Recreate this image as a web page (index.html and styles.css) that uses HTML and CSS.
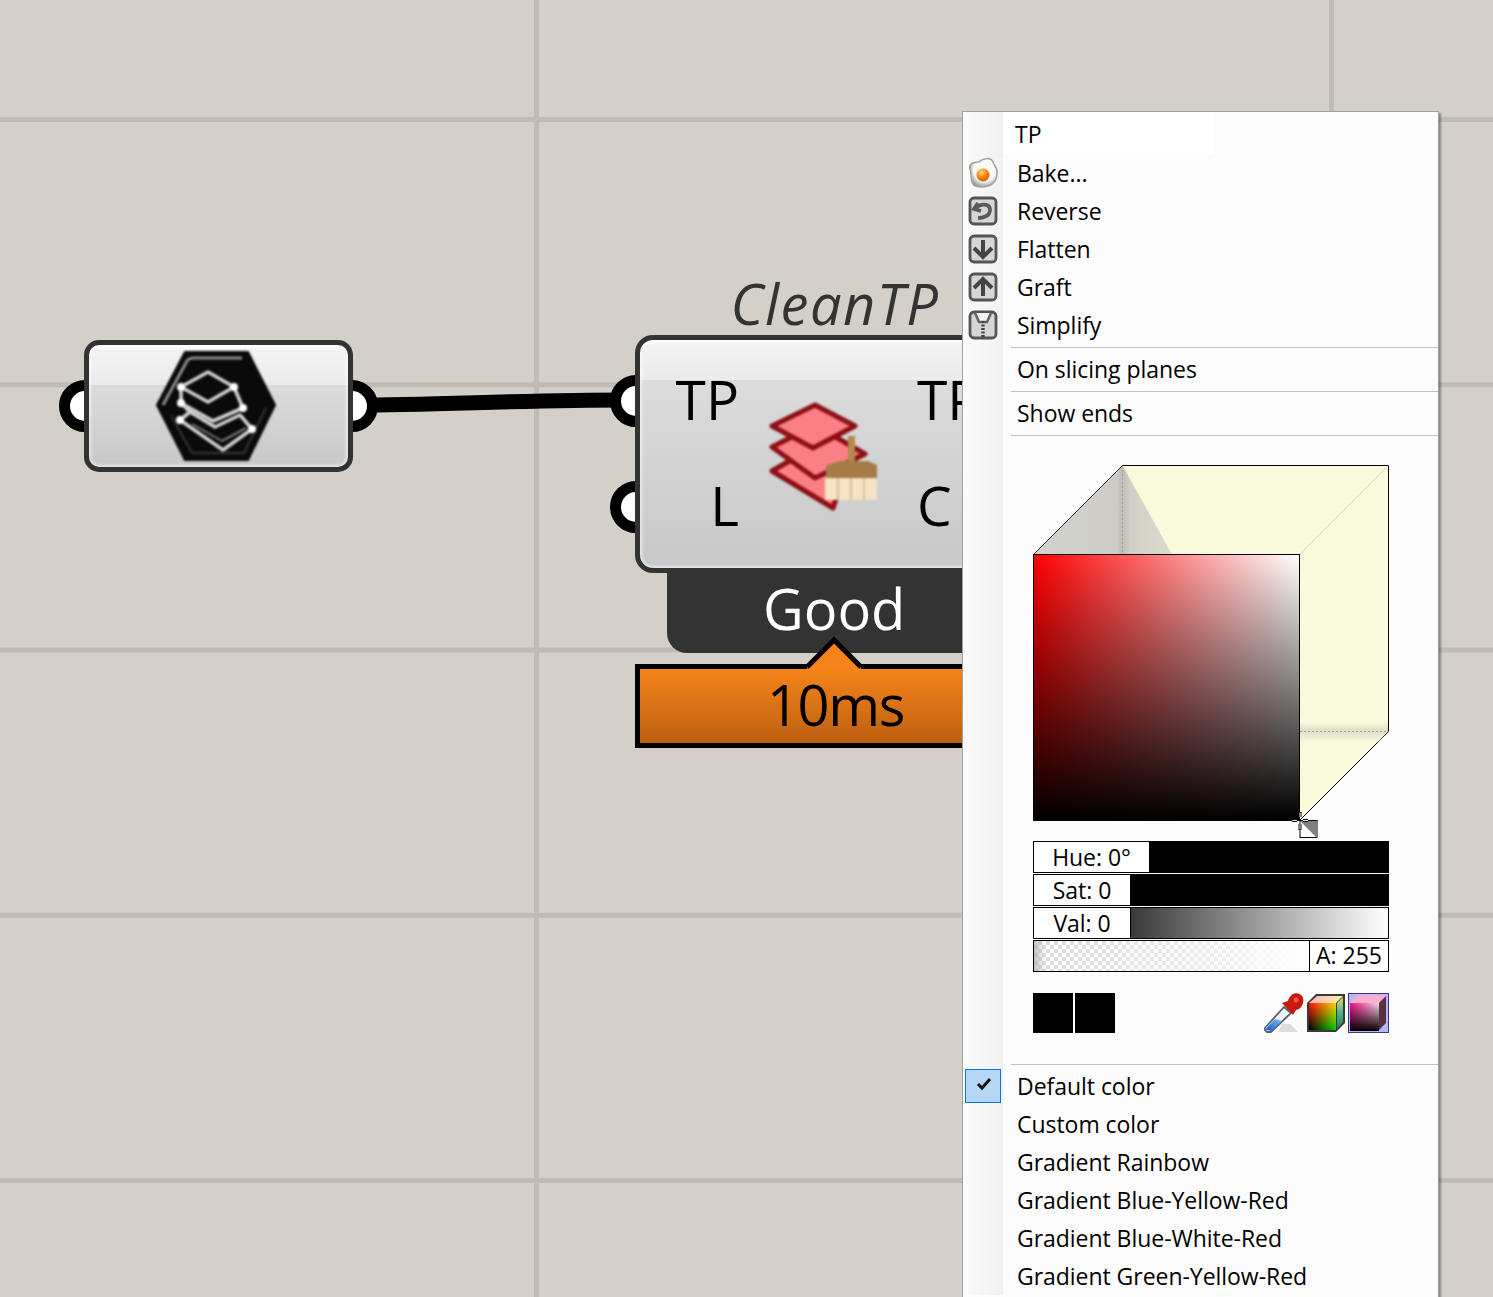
FILE: index.html
```html
<!DOCTYPE html>
<html lang="en">
<head>
<meta charset="utf-8">
<title>CleanTP</title>
<link rel="stylesheet" href="styles.css">
</head>
<body>
<main class="canvas">
  <svg class="wire" width="300" height="30" viewBox="0 0 300 30"><path d="M0 17 C80 17 170 12 270 12" fill="none" stroke="#000" stroke-width="15"/></svg>

  <section class="node source">
    <i class="port port-out"></i><i class="port port-in"></i>
    <div class="node-body source-body">
      <svg class="hex" width="130" height="120" viewBox="150 346 130 120">
        <polygon points="185,352 248,352 275,405 248,460 185,460 157,405" fill="#0a0a0a" stroke="#0a0a0a" stroke-width="2" stroke-linejoin="round"/>
        <path d="M163 405 L187 361 Q189 358 194 358 H242" fill="none" stroke="#8a8a8a" stroke-width="3"/>
        <path d="M171 415 L192 453 H244 L266 408" fill="none" stroke="#2e2e2e" stroke-width="2.500"/>
        <g fill="none" stroke="#d0d0d0" stroke-width="3.600" stroke-linejoin="round">
          <path d="M181 387 L208 372 L234 387 L208 402 Z"/>
          <path d="M181 387 V403 L213 421 L243 408 L234 387"/>
          <path d="M181 403 L190 412 L215 427 L240 415 L252 429 L223 450 L180 420 L190 412"/>
          <path d="M192 424 L222 441 L246 428" stroke-width="2" stroke="#777"/>
        </g>
        <g fill="#fff"><circle cx="181" cy="387" r="4"/><circle cx="234" cy="387" r="4"/><circle cx="181" cy="403" r="4"/><circle cx="243" cy="408" r="4"/><circle cx="180" cy="420" r="4"/><circle cx="252" cy="429" r="4"/></g>
      </svg>
    </div>
  </section>

  <section class="node clean">
    <h2 class="nick">CleanTP</h2>
    <i class="port port-in port-a"></i><i class="port port-in port-b"></i>
    <div class="node-body clean-body">
      <div class="params params-in"><span>TP</span><span>L</span></div>
      <svg class="broom" width="124" height="120" viewBox="760 396 124 120">
        <g stroke="#8c0f14" stroke-width="5" stroke-linejoin="round" fill="#fb8085">
          <polygon points="772,470 812,447 845,470 833,507"/>
          <polygon points="772,446 815,424 865,453 815,477"/>
          <polygon points="772,425 815,404 855,425 813,447"/>
        </g>
        <rect x="848" y="435" width="7" height="28" fill="#b08a4e"/>
        <path d="M826 464 L840 460 H868 L877 464 V477 H826 Z" fill="#a57c48"/>
        <rect x="825" y="477" width="52" height="22" fill="#f6e2c4"/>
        <path d="M838 477 V499 M851 477 V499 M864 477 V499" stroke="#dcc09a" stroke-width="2"/>
      </svg>
      <div class="params params-out"><span>TP</span><span>C</span></div>
    </div>
    <div class="message">Good</div>
    <div class="profiler">10ms</div>
    <svg class="pointer" width="60" height="34" viewBox="0 0 60 34"><path d="M3 32 L30 5 L57 32 V34 H3Z" fill="#f5841a"/><path d="M3 32 L30 5 L57 32" fill="none" stroke="#000" stroke-width="5"/></svg>
  </section>
</main>

<nav class="menu">
  <div class="menu-row name-row"><span class="gutter"></span><span class="name-box">TP</span></div>
  <div class="menu-row"><span class="gutter"><svg class="icon soft" width="32" height="32" viewBox="0 0 32 32"><defs><radialGradient id="egg" cx=".55" cy=".4" r=".65"><stop offset=".6" stop-color="#fbfbf8"/><stop offset="1" stop-color="#8a8a85"/></radialGradient><radialGradient id="yolk" cx=".4" cy=".3" r=".8"><stop offset="0" stop-color="#ffd98a"/><stop offset=".45" stop-color="#f78a10"/><stop offset="1" stop-color="#d84a08"/></radialGradient></defs><path d="M3 12 C1 6 8 5 12 5 C16 1 24 0 26 5 C27 9 31 11 30 16 C30 22 27 27 21 29 C15 31 8 30 6 27 C3 23 5 17 3 12Z" fill="url(#egg)" stroke="#a3a39e" stroke-width="1.500"/><circle cx="16" cy="18" r="6.500" fill="url(#yolk)"/></svg></span><span>Bake...</span></div>
  <div class="menu-row"><span class="gutter"><svg class="icon soft-btn" width="32" height="32" viewBox="0 0 32 32"><rect x="3" y="3" width="26" height="26" rx="4" class="btn-face"/><path d="M11 8 L7 14 L14 16 M8 14 C13 8 23 8 23 15 C23 21 16 23 11 23" fill="none" stroke="#5a5a5a" stroke-width="3.800"/></svg></span><span>Reverse</span></div>
  <div class="menu-row"><span class="gutter"><svg class="icon soft-btn" width="32" height="32" viewBox="0 0 32 32"><rect x="3" y="3" width="26" height="26" rx="4" class="btn-face"/><path d="M16 7 V24 M7 15 L16 24 L25 15" fill="none" stroke="#444" stroke-width="4"/></svg></span><span>Flatten</span></div>
  <div class="menu-row"><span class="gutter"><svg class="icon soft-btn" width="32" height="32" viewBox="0 0 32 32"><rect x="3" y="3" width="26" height="26" rx="4" class="btn-face"/><path d="M16 25 V8 M7 17 L16 8 L25 17" fill="none" stroke="#444" stroke-width="4"/></svg></span><span>Graft</span></div>
  <div class="menu-row"><span class="gutter"><svg class="icon soft-btn" width="32" height="32" viewBox="0 0 32 32"><rect x="3" y="3" width="26" height="26" rx="4" class="btn-face"/><path d="M8 4 L12 13 H20 L24 4" fill="#f4f4f4" stroke="#666" stroke-width="2.600"/><path d="M16 12 V28" stroke="#444" stroke-width="3.400" stroke-dasharray="2 1.500"/></svg></span><span>Simplify</span></div>
  <div class="menu-sep"><span class="gutter"></span><hr></div>
  <div class="menu-row"><span class="gutter"></span><span>On slicing planes</span></div>
  <div class="menu-sep"><span class="gutter"></span><hr></div>
  <div class="menu-row"><span class="gutter"></span><span>Show ends</span></div>
  <div class="menu-sep"><span class="gutter"></span><hr></div>

  <div class="picker-wrap">
    <span class="gutter"></span>
    <div class="picker">
      <svg class="cube" width="357" height="376" viewBox="0 0 357 376">
        <defs>
          <linearGradient id="sv-x"><stop offset="0" stop-color="#f00"/><stop offset="1" stop-color="#fff"/></linearGradient>
          <linearGradient id="sv-y" x2="0" y2="1"><stop offset="0" stop-color="#000" stop-opacity="0"/><stop offset="1" stop-color="#000"/></linearGradient>
          <linearGradient id="floor" x2="0" y2="1"><stop offset="0" stop-color="#f9f9dc"/><stop offset=".45" stop-color="#dcdcc6"/><stop offset="1" stop-color="#f9f9dc"/></linearGradient>
          <linearGradient id="wall"><stop offset="0" stop-color="#d2d2cc"/><stop offset=".6" stop-color="#cdcdc6"/><stop offset=".64" stop-color="#bdbdb6"/><stop offset=".7" stop-color="#d0d0c8"/><stop offset="1" stop-color="#dcdccc"/></linearGradient>
        </defs>
        <polygon points="89.500,.5 355.500,.5 355.500,266.500 267,355 0.500,89.500" fill="#f9f9dc" stroke="#000"/>
        <polygon points="89.500,.5 .5,89.500 139,89.500" fill="url(#wall)"/>
        <path d="M.5 89.500 L89.500 .5" stroke="#333" fill="none"/>
        <polygon points="267,257 355,257 355,266.500 345,277 267,277" fill="url(#floor)"/>
        <path d="M355.500 .5 L267 89" stroke="#d8d8c4" fill="none"/>
        <path d="M89.500 1 V89 M267 266.500 H355" stroke="#a5a59a" stroke-dasharray="2 2" fill="none"/>
        <rect x=".5" y="89.500" width="266" height="266" fill="url(#sv-x)"/>
        <rect x=".5" y="89.500" width="266" height="266" fill="url(#sv-y)" stroke="#000"/>
        <rect x="267" y="355.500" width="17" height="17" fill="#fff" stroke="#000"/>
        <polygon points="267,356 284,356 284,373" fill="#808080"/>
        <path d="M267 347 V352 M267 359 V365 M259 355.500 H264 M270 355.500 H275" stroke="#000" stroke-width="3"/>
        <path d="M267 347.500 V352 M267 359 V364.500 M259.500 355.500 H264 M270 355.500 H275" stroke="#fff" stroke-width="1"/>
      </svg>
      <div class="sliders">
        <div class="slider"><span class="slider-label hue-label">Hue: 0°</span><span class="track"></span></div>
        <div class="slider"><span class="slider-label sv-label">Sat: 0</span><span class="track"></span></div>
        <div class="slider"><span class="slider-label sv-label">Val: 0</span><span class="track val-track"></span></div>
        <div class="slider"><span class="track alpha-track"></span><span class="slider-label alpha-label">A: 255</span></div>
      </div>
      <div class="swatches">
        <span class="swatch"></span><span class="swatch"></span>
        <span class="tools">
          <svg class="soft" width="40" height="40" viewBox="0 0 40 40"><defs><linearGradient id="drop" x1="0" y1="1" x2="1" y2="0"><stop offset="0" stop-color="#0a55d8"/><stop offset="1" stop-color="#7fc4f2"/></linearGradient></defs><path d="M14 39 H34 L26 31 L18 31Z" fill="#dedede"/><path d="M3 39 L0 36 L20 14 L27 20 L7 39Z" fill="#eef3f7" stroke="#56626e" stroke-width="1.800"/><path d="M1.500 36.500 L11 26 L18 28 L7 38Z" fill="url(#drop)"/><path d="M18 10 L29 22 L32 17 C39 16 41 7 38 3 C34 -2 26 0 24 8Z" fill="#c8170e"/><circle cx="32" cy="7" r="2.500" fill="#e8584e"/></svg>
          <svg class="soft" width="40" height="40" viewBox="0 0 40 40"><defs><linearGradient id="rb" x2="0" y2="1"><stop offset="0" stop-color="#ff1505"/><stop offset="1" stop-color="#000"/></linearGradient><linearGradient id="gx"><stop offset="0" stop-color="#00d000" stop-opacity="0"/><stop offset="1" stop-color="#00d000"/></linearGradient><linearGradient id="gtop"><stop offset="0" stop-color="#ffb0c0"/><stop offset="1" stop-color="#f8f0a8"/></linearGradient><linearGradient id="gside" x2="0" y2="1"><stop offset="0" stop-color="#e0e060"/><stop offset=".5" stop-color="#50b090"/><stop offset="1" stop-color="#207858"/></linearGradient></defs><polygon points="1,10 10,1 39,1 39,30 30,39 1,39" fill="#383838"/><polygon points="3,10 11,3 37,3 30,10" fill="url(#gtop)"/><rect x="3" y="10" width="27" height="27" fill="url(#rb)"/><rect class="screen" x="3" y="10" width="27" height="27" fill="url(#gx)"/><polygon points="31,10 37,4 37,29 31,36" fill="url(#gside)"/></svg>
          <svg class="soft" width="41" height="40" viewBox="0 0 41 40"><defs><linearGradient id="pcx"><stop offset="0" stop-color="#f01088"/><stop offset="1" stop-color="#f8d8e4"/></linearGradient><linearGradient id="pcy" x2="0" y2="1"><stop offset="0" stop-color="#000" stop-opacity="0"/><stop offset="1" stop-color="#000"/></linearGradient></defs><rect x=".5" y=".5" width="40" height="39" fill="#b9b4f2" stroke="#3c3490"/><polygon points="2,10 10,2 38,2 31,10" fill="#fbb0d0"/><rect x="2" y="10" width="29" height="28" fill="url(#pcx)"/><rect x="2" y="10" width="29" height="28" fill="url(#pcy)"/><polygon points="31,10 38,3 38,30 31,37" fill="#5a3040"/></svg>
        </span>
      </div>
    </div>
  </div>

  <div class="menu-sep"><span class="gutter"></span><hr></div>
  <div class="menu-row"><span class="gutter"><span class="check"><svg width="16" height="14" viewBox="0 0 16 14"><path d="M2 7 L6 11 L14 2" fill="none" stroke="#111" stroke-width="3"/></svg></span></span><span>Default color</span></div>
  <div class="menu-row"><span class="gutter"></span><span>Custom color</span></div>
  <div class="menu-row"><span class="gutter"></span><span>Gradient Rainbow</span></div>
  <div class="menu-row"><span class="gutter"></span><span>Gradient Blue-Yellow-Red</span></div>
  <div class="menu-row"><span class="gutter"></span><span>Gradient Blue-White-Red</span></div>
  <div class="menu-row"><span class="gutter"></span><span>Gradient Green-Yellow-Red</span></div>
</nav>
</body>
</html>
```
FILE: styles.css
```css
html, body { margin: 0; height: 100%; overflow: hidden; }
body { position: relative; font-family: "Open Sans", "Noto Sans", sans-serif; color: #000; }

.canvas {
  position: absolute; inset: 0;
  background-color: #d4d0c8;
  background-image: linear-gradient(90deg, #c0bcb4 5px, transparent 5px), linear-gradient(#c0bcb4 5px, transparent 5px);
  background-size: 795px 100%, 100% 265.25px;
  background-position: 534px 0, 0 117px;
  background-repeat: repeat;
}

.wire { position: absolute; left: 355px; top: 388px; }

.node { position: absolute; }
.node-body {
  position: relative; z-index: 1; box-sizing: border-box; height: 100%;
  border: 5px solid #333;
  background: linear-gradient(#fff 0, #f2f2f2 6px, #ebebeb 40px, #dcdcdc 40px, #c8c8c8 100%);
  box-shadow: inset 0 0 3px 2px rgba(255, 255, 255, .55);
}
.source { left: 84px; top: 340px; width: 269px; height: 132px; }
.source-body { border-radius: 15px; display: flex; align-items: center; justify-content: center; }
.hex { filter: blur(.9px); margin-left: -7px; }

.clean { left: 635px; top: 335px; width: 400px; height: 238px; }
.clean-body {
  border-radius: 18px 18px 0 18px; display: flex;
  font-size: 55px; line-height: 106px;
}
.nick {
  position: absolute; left: 0; right: 0; top: -70px; margin: 0;
  text-align: center; font-size: 56px; font-weight: 400; font-style: italic; color: #333; line-height: 76px;
  letter-spacing: 1.5px;
}
.params { display: flex; flex-direction: column; padding-top: 6px; }
.params-in { width: 99px; align-items: flex-end; }
.params-out { width: 113px; margin-left: auto; }
.broom { filter: blur(.8px); margin-top: 57px; align-self: flex-start; margin-left: 21px; }

.port {
  position: absolute; width: 52px; height: 52px; box-sizing: border-box;
  border: 11px solid #000; border-radius: 50%; background: #fff;
}
.port-out { right: -25px; top: 40px; }
.port-in { left: -25px; top: 40px; }
.port-a { left: -25px; top: 40px; }
.port-b { left: -25px; top: 146px; }

.message {
  position: absolute; left: 32px; right: 0; top: 233px; height: 85px;
  background: #333; color: #fff; border-radius: 0 0 0 20px;
  font-size: 56px; line-height: 80px; padding-left: 96px;
}
.profiler {
  position: absolute; left: 0; right: 0; top: 329px; height: 84px; box-sizing: border-box;
  border: 5px solid #000; background: linear-gradient(#f5841a, #bd5f10);
  font-size: 56px; line-height: 70px; padding-left: 127px; letter-spacing: -1.4px;
}
.pointer { position: absolute; left: 169px; top: 300px; z-index: 2; }

.menu {
  position: absolute; z-index: 5; left: 962px; top: 111px; width: 475px; bottom: -4px;
  background: #fcfcfc; border: 1px solid #a0a0a0;
  box-shadow: 2px 2px 2px rgba(0, 0, 0, .35);
  font-size: 23px; line-height: 38px; letter-spacing: -.04px;
  overflow: hidden;
}
.gutter {
  flex: none; width: 40px; background: linear-gradient(90deg, #fbfbfb, #f1f1f1);
  align-self: stretch; display: flex; align-items: center; justify-content: center;
}
.menu-row { display: flex; height: 38px; }
.menu-row > span:last-child { padding-left: 14px; }
.name-row { height: 42px; }
.menu-row.name-row > .name-box {
  width: 198px; padding-left: 12px; background: #fff; line-height: 44px;
}
.icon { display: block; }
.soft { filter: blur(.35px); }
.soft-btn { filter: blur(.5px); }
.screen { mix-blend-mode: screen; }
.btn-face { fill: #d6d6d6; stroke: #555; stroke-width: 2.8; }

.menu-sep { display: flex; height: 6px; }
.menu-sep hr { flex: 1; height: 1px; margin: 3px 0 2px 8px; border: 0; background: #c0c0c0; }

.picker-wrap { display: flex; }
.picker { flex: none; width: 357px; padding: 27px 0 28px 30px; }
.cube { display: block; }
.sliders { display: grid; grid-auto-rows: 32px; row-gap: 1px; width: 356px; }
.slider { display: flex; box-sizing: border-box; border: 1px solid #000; line-height: 30px; }
.slider-label { background: #fff; text-align: center; flex: none; border-right: 1px solid #000; }
.hue-label { width: 115px; }
.sv-label { width: 96px; }
.alpha-label { width: 78px; border-right: 0; border-left: 1px solid #000; line-height: 29px; }
.track { flex: 1; background: #000; }
.val-track { background: linear-gradient(90deg, #3a3a3a, #fff); }
.alpha-track {
  background:
    linear-gradient(90deg, rgba(170,170,170,.7), rgba(255,255,255,0) 12px, rgba(255,255,255,.5) 70%, #fff),
    repeating-conic-gradient(#dcdcdc 0 25%, #fff 0 50%) 0 0 / 8px 8px;
}
.swatches { display: flex; gap: 2px; width: 356px; margin-top: 21px; }
.swatch { width: 40px; height: 40px; background: #000; }
.tools { display: flex; gap: 2px; margin-left: auto; }
.tools svg { display: block; }

.check {
  box-sizing: border-box; width: 36px; height: 34px; background: #b5d7f5; border: 1px solid #0078d7;
  display: flex; align-items: center; justify-content: center;
}
.check svg { margin-top: -4px; margin-left: 2px; }
```
